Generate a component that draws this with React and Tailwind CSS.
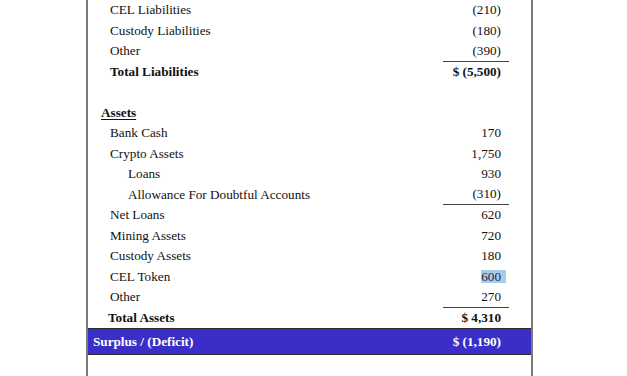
import React from "react";

const rows = [
  { label: "CEL Liabilities", value: "(210)", pl: "pl-[22px]" },
  { label: "Custody Liabilities", value: "(180)", pl: "pl-[22px]" },
  { label: "Other", value: "(390)", pl: "pl-[22px]", line: true },
  { label: "Total Liabilities", value: "$ (5,500)", pl: "pl-[22px]", bold: true },
  { label: "", value: "" },
  { label: "Assets", value: "", pl: "pl-[13px]", bold: true, underline: true },
  { label: "Bank Cash", value: "170", pl: "pl-[22px]" },
  { label: "Crypto Assets", value: "1,750", pl: "pl-[22px]" },
  { label: "Loans", value: "930", pl: "pl-[40px]" },
  { label: "Allowance For Doubtful Accounts", value: "(310)", pl: "pl-[40px]", line: true },
  { label: "Net Loans", value: "620", pl: "pl-[22px]" },
  { label: "Mining Assets", value: "720", pl: "pl-[22px]" },
  { label: "Custody Assets", value: "180", pl: "pl-[22px]" },
  { label: "CEL Token", value: "600", pl: "pl-[22px]", highlight: true },
  { label: "Other", value: "270", pl: "pl-[22px]", line: true },
  { label: "Total Assets", value: "$ 4,310", pl: "pl-[20px]", bold: true },
];

export default function App() {
  return (
    <div className="w-[627px] h-[376px] bg-white overflow-hidden [font-family:'Liberation_Serif','Times_New_Roman',serif] text-[13.2px] text-[#111]">
      <div className="ml-[86px] w-[447px] h-[376px] border-x-2 border-[#7a7a7a] flex flex-col">
        {rows.map((r, i) => (
          <div key={i} className="h-[20.5px] flex items-center justify-between">
            <div
              className={`${r.pl || ""} ${r.bold ? "font-bold" : ""} ${r.underline ? "underline underline-offset-2" : ""}`}
            >
              {r.label}
            </div>
            <div
              className={`mr-[22px] w-[66px] h-full flex items-center justify-end pr-[8px] box-border ${
                r.line ? "border-b border-[#444]" : ""
              } ${r.bold ? "font-bold" : ""}`}
            >
              {r.highlight ? (
                <span className="bg-[#a9cbe8] text-[#1b2a4a] pr-[5px] -mr-[5px] leading-[13px]">{r.value}</span>
              ) : (
                r.value
              )}
            </div>
          </div>
        ))}
        <div className="h-[27px] bg-[#3a2ec9] border-y border-[#2a2a2a] flex items-center justify-between text-white font-bold">
          <div className="pl-[5px]">Surplus / (Deficit)</div>
          <div className="mr-[30px]">$ (1,190)</div>
        </div>
      </div>
    </div>
  );
}
